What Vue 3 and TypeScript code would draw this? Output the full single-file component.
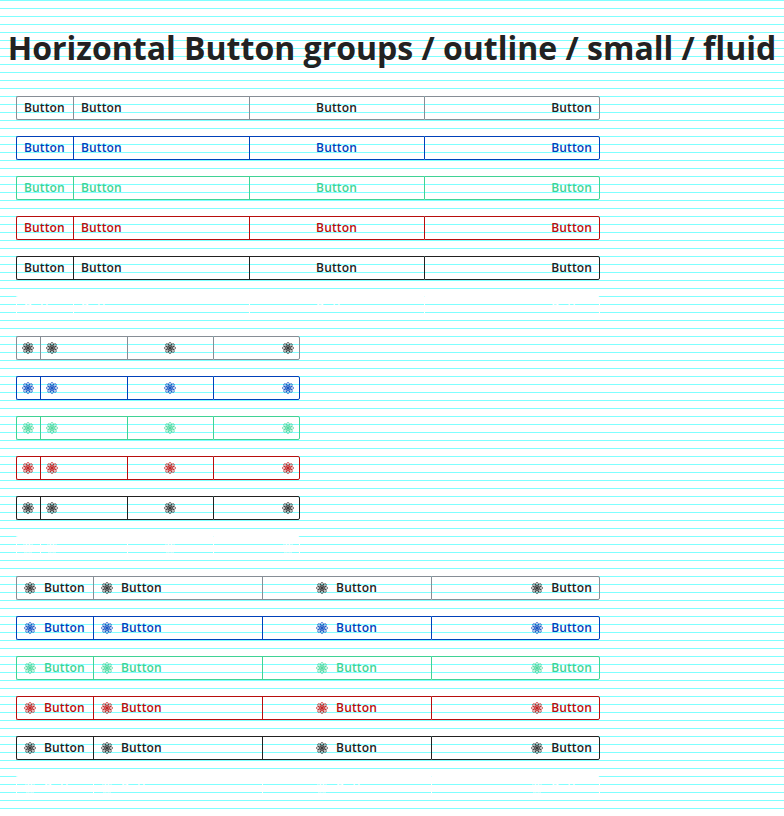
<script setup lang="ts">
type Kind = 'text' | 'icon' | 'both'

const kinds: Kind[] = ['text', 'icon', 'both']
const variants: string[] = ['secondary', 'primary', 'success', 'danger', 'dark', 'light']
const aligns: string[] = ['fit', 'start', 'center', 'end']
const orbits: number[] = [0, 45, 90, 135]
</script>

<template>
  <main class="page">
    <h1 class="title">Horizontal Button groups / outline / small / fluid</h1>
    <section v-for="kind in kinds" :key="kind" class="section" :class="kind">
      <div v-for="variant in variants" :key="variant" class="group" :class="variant">
        <button v-for="align in aligns" :key="align" type="button" class="button" :class="align">
          <svg v-if="kind !== 'text'" class="icon" viewBox="0 0 24 24" aria-hidden="true">
            <ellipse
              v-for="angle in orbits"
              :key="angle"
              cx="12"
              cy="12"
              rx="11.4"
              ry="3.9"
              :transform="`rotate(${angle} 12 12)`"
            />
            <circle cx="12" cy="12" r="2" />
          </svg>
          <span v-if="kind !== 'icon'">Button</span>
        </button>
      </div>
    </section>
  </main>
</template>

<style>
body {
  background: #fff;
}
</style>

<style scoped>
.page {
  box-sizing: border-box;
  height: 816px;
  overflow: hidden;
  padding-top: 24px;
  font-family: 'Open Sans', 'Noto Sans', sans-serif;
  background: repeating-linear-gradient(to bottom, #7fffff 0, #7fffff 1px, transparent 1px, transparent 8px);
}

.title {
  margin: 0 0 24px;
  font-size: 32px;
  line-height: 48px;
  font-weight: 700;
  text-align: center;
  white-space: nowrap;
  color: #222;
}

.section {
  display: flex;
  flex-direction: column;
  gap: 16px;
  width: 584px;
  margin: 0 0 16px 16px;
}

.section.icon {
  width: 284px;
}

.group {
  display: flex;
  height: 24px;
}

.button {
  box-sizing: border-box;
  display: flex;
  flex: 1 1 0;
  align-items: center;
  gap: 8px;
  min-width: 0;
  height: 24px;
  margin: 0;
  padding: 0 8px 0 7px;
  border: 1px solid var(--line);
  border-right: 0;
  background: transparent;
  color: var(--ink);
  font-family: inherit;
  font-size: 12px;
  font-weight: 600;
  letter-spacing: 0.14px;
  line-height: 16px;
  white-space: nowrap;
}

.section.icon .button {
  padding: 0 6px 0 5px;
}

.button.fit {
  flex: 0 0 57px;
  border-radius: 2px 0 0 2px;
}

.section.icon .button.fit {
  flex-basis: 24px;
}

.section.both .button.fit {
  flex-basis: 77px;
}

.button.center {
  justify-content: center;
}

.button.end {
  justify-content: flex-end;
  padding-right: 7px;
  border-right: 1px solid var(--line);
  border-radius: 0 2px 2px 0;
}

.section.icon .button.end {
  padding-right: 5px;
}

svg.icon {
  flex: none;
  width: 12px;
  height: 12px;
  fill: none;
  stroke: currentColor;
  stroke-width: 1.35;
}

svg.icon circle {
  fill: currentColor;
}

.secondary {
  --line: #868e96;
  --ink: #222;
}

.primary {
  --line: #0041ba;
  --ink: #0041ba;
}

.success {
  --line: #3fd395;
  --ink: #3fd395;
}

.danger {
  --line: #b80d0d;
  --ink: #b80d0d;
}

.dark {
  --line: #212121;
  --ink: #212121;
}

.light {
  --line: #fff;
  --ink: #fff;
}
</style>
